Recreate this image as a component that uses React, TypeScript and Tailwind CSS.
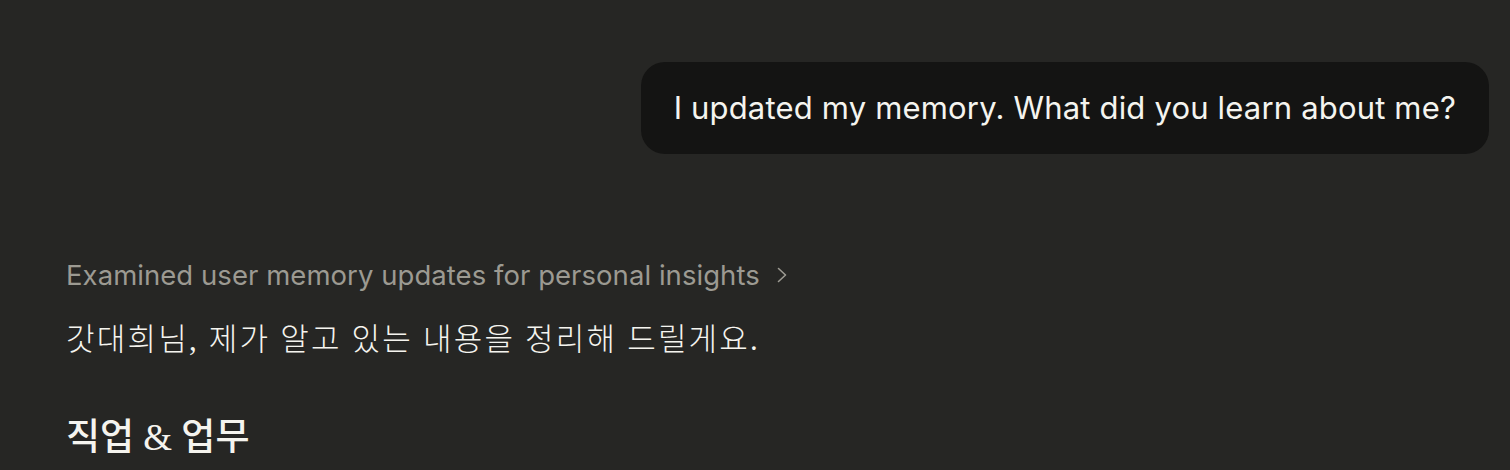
import React from 'react';

export default function App() {
  return (
    <div className="w-[1510px] h-[470px] overflow-hidden bg-[#262624] pl-[66px] pr-[21px] pt-[62px]">
      {/* User message */}
      <div className="flex justify-end">
        <div className="rounded-[24px] bg-[#141413] px-[33px] h-[92px] flex items-center text-[31px] text-[#f5f4ef] font-['Inter','Noto_Sans',sans-serif] tracking-[0.18px]">
          I updated my memory. What did you learn about me?
        </div>
      </div>

      {/* Assistant reply */}
      <div className="mt-[101px] flex flex-col">
        <button className="flex items-center gap-[16px] text-[27.5px] leading-[40px] text-[#9c9a92] font-['Inter','Noto_Sans',sans-serif] tracking-[0.05px] self-start">
          <span>Examined user memory updates for personal insights</span>
          <svg width="12" height="18" viewBox="0 0 12 18" fill="none" stroke="currentColor" strokeWidth="1.6" strokeLinecap="round" strokeLinejoin="round">
            <path d="M2.5 2.5l7 6.5-7 6.5" />
          </svg>
        </button>
        <p className="mt-[24px] text-[31px] leading-[42px] tracking-[2.2px] text-[#f5f4ef] font-['Liberation_Serif','Noto_Sans_CJK_KR',serif] font-light">
          갓대희님, 제가 알고 있는 내용을 정리해 드릴게요.
        </p>
        <h2 className="mt-[52px] text-[37px] leading-[50px] text-[#f5f4ef] font-['Liberation_Serif','Noto_Sans_CJK_KR',serif] font-medium">
          직업 &amp; 업무
        </h2>
      </div>
    </div>
  );
}
